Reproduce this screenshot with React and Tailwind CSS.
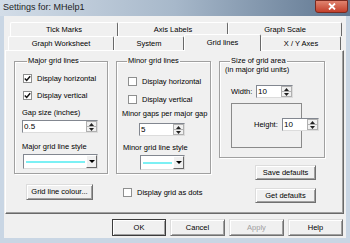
import React from 'react';

const Check = ({ checked, label, className = '' }) => (
  <label className={`flex items-center gap-[5px] h-[9px] ${className}`}>
    <span className="w-[9px] h-[9px] shrink-0 border border-[#8e8f8f] bg-white flex items-center justify-center">
      {checked && (
        <svg width="7" height="7" viewBox="0 0 7 7">
          <path d="M0.8 3.4 L2.7 5.4 L6.2 1.2" fill="none" stroke="#151515" strokeWidth="1.5" />
        </svg>
      )}
    </span>
    <span className="whitespace-nowrap">{label}</span>
  </label>
);

const Arrow = ({ up }) => (
  <svg width="5" height="3" viewBox="0 0 5 3">
    <path d={up ? 'M0 3 L2.5 0 L5 3 Z' : 'M0 0 L5 0 L2.5 3 Z'} fill="#222" />
  </svg>
);

const Spin = ({ value, className = '' }) => (
  <div className={`flex h-[13px] shrink-0 bg-white border border-t-[#828790] border-l-[#828790] border-r-[#dcdcdc] border-b-[#dcdcdc] ${className}`}>
    <span className="flex-1 flex items-center pl-[1px] text-[8px]">{value}</span>
    <div className="w-[11px] flex flex-col border border-[#b0b0b0] bg-[#f0f0f0]">
      <div className="flex-1 flex items-center justify-center border-b border-[#b0b0b0]">
        <Arrow up />
      </div>
      <div className="flex-1 flex items-center justify-center">
        <Arrow />
      </div>
    </div>
  </div>
);

const LineSelect = ({ className = '' }) => (
  <div className={`flex h-[15px] bg-white border border-t-[#828790] border-l-[#828790] border-r-[#dcdcdc] border-b-[#dcdcdc] ${className}`}>
    <div className="flex-1 flex items-center pl-[2px] pr-[1px]">
      <div className="h-[2px] w-full bg-[#7cf0f4]" />
    </div>
    <div className="w-[11px] flex items-center justify-center bg-[#f0f0f0] border border-t-white border-l-white border-r-[#696969] border-b-[#696969]">
      <svg width="6" height="3" viewBox="0 0 6 3">
        <path d="M0 0 L6 0 L3 3 Z" fill="#000" />
      </svg>
    </div>
  </div>
);

const Btn = ({ children, className = '', disabled, isDefault }) => (
  <button
    className={`flex items-center justify-center bg-[#f0f0f0] border ${
      isDefault ? 'border-[#3c3c3c]' : 'border-t-[#dcdcdc] border-l-[#dcdcdc] border-r-[#707070] border-b-[#707070]'
    } shadow-[inset_1px_1px_0_#fff,inset_-1px_-1px_0_#a0a0a0] ${disabled ? 'text-[#a0a0a0]' : 'text-black'} ${className}`}
  >
    {children}
  </button>
);

const Group = ({ title, className = '', children }) => (
  <fieldset className={`border border-[#a0a0a0] shadow-[1px_1px_0_#fff,inset_1px_1px_0_#fff] ${className}`}>
    <legend className="ml-[5px] px-[1px] leading-[8px]">{title}</legend>
    {children}
  </fieldset>
);

const Tab = ({ label, w, selected }) => (
  <div
    className={`flex items-center justify-center shrink-0 bg-[#f0f0f0] border-t border-l border-white border-r border-r-[#696969] rounded-t-[2px] ${
      selected ? 'h-[17px] -mt-[2px] -mb-[1px] relative z-10' : 'h-[14px]'
    }`}
    style={{ width: w }}
  >
    {label}
  </div>
);

export default function App() {
  return (
    <div className="w-[350px] h-[243px] flex flex-col bg-[#c9d6e4] font-['Liberation_Sans',Arial,sans-serif] text-[7.5px] leading-none text-black overflow-hidden">
      {/* title bar */}
      <div className="h-[16px] shrink-0 flex items-start justify-between bg-gradient-to-r from-[#d3dde8] via-[#a7b8ca] to-[#5f7690]">
        <span className="pl-[3px] pt-[3px] text-[9px] text-[#1e1e1e]">Settings for: MHelp1</span>
        <div className="w-[33px] h-[13px] mr-[2px] rounded-b-[3px] bg-gradient-to-b from-[#e0836f] to-[#c23e2a] border border-[#7a2a20] flex items-center justify-center">
          <svg width="8" height="7" viewBox="0 0 8 7">
            <path d="M1 0.5 L7 6.5 M7 0.5 L1 6.5" stroke="#fff" strokeWidth="1.8" />
          </svg>
        </div>
      </div>

      {/* dialog body */}
      <div className="flex-1 mx-[4px] mb-[5px] bg-[#f0f0f0] flex flex-col">
        {/* tab rows */}
        <div className="pt-[6px] pl-[6px] flex">
          <Tab label="Tick Marks" w={108} />
          <Tab label="Axis Labels" w={110} />
          <Tab label="Graph Scale" w={114} />
        </div>
        <div className="pl-[4px] flex">
          <Tab label="Graph Worksheet" w={106} />
          <Tab label="System" w={70} />
          <Tab label="Grid lines" w={77} selected />
          <Tab label="X / Y Axes" w={80} />
        </div>

        {/* tab page */}
        <div className="ml-[1px] mr-[2px] h-[164px] border border-t-white border-l-white border-r-[#696969] border-b-[#696969] shadow-[inset_-1px_-1px_0_#a0a0a0] pl-[8px] pt-[6px] flex gap-[8px]">
          {/* column 1 */}
          <div className="w-[94px] flex flex-col">
            <Group title="Major grid lines" className="h-[117px] pl-[7px] pr-[9px]">
              <Check checked label="Display horizontal" className="ml-[1px] mt-[9px]" />
              <Check checked label="Display vertical" className="ml-[1px] mt-[8px]" />
              <div className="mt-[9px] h-[8px]">Gap size (inches)</div>
              <Spin value="0.5" className="mt-[3px] w-[76px]" />
              <div className="mt-[10px] h-[8px]">Major grid line style</div>
              <LineSelect className="mt-[3px] ml-[1px] w-[75px]" />
            </Group>
            <Btn className="mt-[10px] ml-[12px] w-[67px] h-[16px]">Grid line colour...</Btn>
          </div>

          {/* column 2 */}
          <div className="w-[95px] flex flex-col">
            <Group title="Minor grid lines" className="h-[117px] pl-[5px]">
              <Check label="Display horizontal" className="ml-[6px] mt-[12px]" />
              <Check label="Display vertical" className="ml-[6px] mt-[9px]" />
              <div className="mt-[6px] h-[8px]">Minor gaps per major gap</div>
              <Spin value="5" className="mt-[5px] ml-[17px] w-[46px]" />
              <div className="mt-[8px] ml-[1px] h-[8px]">Minor grid line style</div>
              <LineSelect className="mt-[3px] ml-[18px] w-[45px]" />
            </Group>
            <Check label="Display grid as dots" className="mt-[14px] ml-[7px]" />
          </div>

          {/* column 3 */}
          <div className="w-[106px] flex flex-col">
            <Group title="Size of grid area" className="h-[101px] pl-[5px]">
              <div className="mt-[1px] h-[8px]">(in major grid units)</div>
              <div className="mt-[11px] ml-[6px] flex items-center gap-[2px]">
                <span className="w-[23px]">Width:</span>
                <Spin value="10" className="w-[37px]" />
              </div>
              <div className="mt-[5px] ml-[6px] w-[71px] h-[45px] border border-[#8a8a8a] pt-[14px] pl-[22px] flex items-start">
                <div className="flex items-center gap-[2px] shrink-0">
                  <span className="w-[26px] pt-[1px]">Height:</span>
                  <Spin value="10" className="w-[37px]" />
                </div>
              </div>
            </Group>
            <Btn className="mt-[7px] ml-[36px] w-[61px] h-[15px]">Save defaults</Btn>
            <Btn className="mt-[8px] ml-[36px] w-[61px] h-[15px]">Get defaults</Btn>
          </div>
        </div>

        {/* dialog buttons */}
        <div className="mt-[5px] mr-[3px] flex justify-end gap-[4px]">
          <Btn isDefault className="w-[54px] h-[17px]">OK</Btn>
          <Btn className="w-[55px] h-[17px]">Cancel</Btn>
          <Btn disabled className="w-[55px] h-[17px]">Apply</Btn>
          <Btn className="w-[55px] h-[17px]">Help</Btn>
        </div>
      </div>
    </div>
  );
}
